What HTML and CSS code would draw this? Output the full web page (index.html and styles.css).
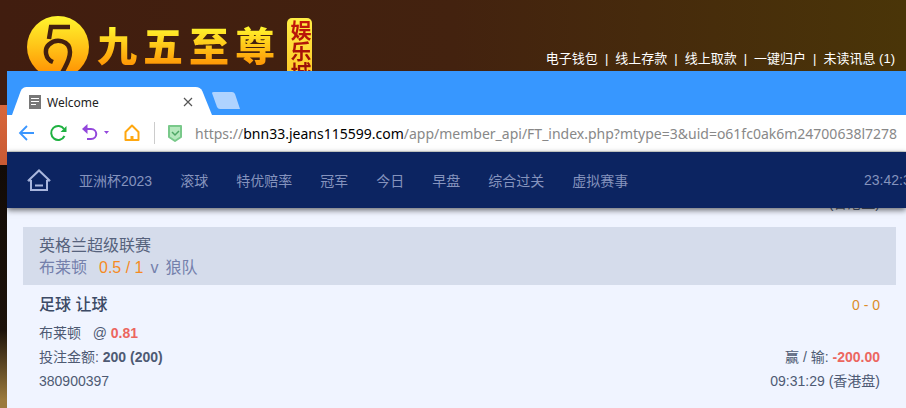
FILE: index.html
```html
<!DOCTYPE html>
<html lang="zh-CN">
<head>
  <meta charset="UTF-8">
  <title>Welcome</title>
  <link rel="stylesheet" href="styles.css">
</head>
<body>

<header class="site-header">
  <div class="logo">
    <svg class="logo-mark" viewBox="0 0 62 62">
      <defs>
        <linearGradient id="gold" x1="0" y1="0" x2="0" y2="1">
          <stop offset="0" stop-color="#fff62e"/>
          <stop offset="0.5" stop-color="#ffc317"/>
          <stop offset="1" stop-color="#ff8a00"/>
        </linearGradient>
      </defs>
      <circle cx="31" cy="31" r="31" fill="url(#gold)"/>
      <g fill="none" stroke="#43200f" stroke-width="4.500">
        <path d="M43 11H24L22 23"/>
        <path d="M26 46C18 43 17 33 22 28.500C29 22 43 24 43 36C43 44 39 49 35 57"/>
      </g>
    </svg>
    <div class="logo-name"><span>九</span><span>五</span><span>至</span><span>尊</span></div>
    <div class="logo-tag"><span>娱乐城</span></div>
  </div>
  <nav class="site-links">
    <a href="#">电子钱包</a><i>|</i>
    <a href="#">线上存款</a><i>|</i>
    <a href="#">线上取款</a><i>|</i>
    <a href="#">一键归户</a><i>|</i>
    <a href="#">未读讯息 (1)</a>
  </nav>
</header>

<div class="window">
  <div class="tabs">
    <div class="tab">
      <svg class="tab-shape" viewBox="0 0 206 28" preserveAspectRatio="none">
        <path d="M0 28L9 4Q11 0 15 0H189Q194 0 196 4L206 28Z" fill="#fff"/>
      </svg>
      <svg class="tab-icon" viewBox="0 0 12 14">
        <path d="M0 0H12V14H0Z" fill="#777"/>
        <path d="M2 3.500H10M2 6.500H10M2 9.500H7" stroke="#fff"/>
      </svg>
      <span class="tab-title">Welcome</span>
      <button class="icon-btn" aria-label="关闭标签">
        <svg width="10" height="10" viewBox="0 0 10 10"><path d="M1 1L9 9M9 1L1 9" stroke="#555" stroke-width="1.2"/></svg>
      </button>
    </div>
    <button class="icon-btn new-tab" aria-label="新标签">
      <svg width="28" height="17" viewBox="0 0 28 17"><path d="M2 0H20Q22 0 23 2L28 17H8Q6 17 5 15L0 1Q0 0 2 0Z" fill="#afd3ff"/></svg>
    </button>
  </div>

  <div class="toolbar">
    <button class="icon-btn" aria-label="后退">
      <svg width="18" height="18" viewBox="0 0 18 18" fill="none" stroke="#3a96ff" stroke-width="1.8"><path d="M16 9H2M9 2L2 9L9 16"/></svg>
    </button>
    <button class="icon-btn" aria-label="刷新">
      <svg width="18" height="18" viewBox="0 0 18 18"><path d="M15 5A7 7 0 1 0 15.500 12" fill="none" stroke="#1fb141" stroke-width="2"/><path d="M17.500 2V8H11.500Z" fill="#1fb141"/></svg>
    </button>
    <button class="icon-btn undo" aria-label="恢复">
      <svg width="28" height="18" viewBox="0 0 28 18"><path d="M4 5H9C16 5 16 15 9 15H5" fill="none" stroke="#9347dc" stroke-width="2"/><path d="M5.500 0V10L0 5Z" fill="#9347dc"/><path d="M22 7H27L24.500 10Z" fill="#9347dc"/></svg>
    </button>
    <button class="icon-btn" aria-label="主页">
      <svg width="18" height="18" viewBox="0 0 18 18"><path d="M2.500 16V8L9 1.500L15.500 8V16Z" fill="none" stroke="#ffa70f" stroke-width="2" stroke-linejoin="round"/><path d="M7.500 12H10.500V16H7.500Z" fill="#ffa70f"/></svg>
    </button>
    <span class="divider"></span>
    <svg class="shield" width="14" height="17" viewBox="0 0 14 17"><path d="M1 1H13V12L7 16L1 12Z" fill="#b5e8bd" stroke="#79c98a" stroke-width="2" stroke-linejoin="round"/><path d="M4 7L7 10L11 6" fill="none" stroke="#4fa765" stroke-width="1.5"/></svg>
    <div class="address" role="textbox" aria-label="地址" contenteditable="true" spellcheck="false">https://<b>bnn33.jeans115599.com</b>/app/member_api/FT_index.php?mtype=3&amp;uid=o61fc0ak6m24700638l7278</div>
  </div>

  <nav class="menu">
    <a class="menu-home" href="#" aria-label="首页">
      <svg width="24" height="22" viewBox="0 0 24 22" fill="none" stroke="#a9b6dd" stroke-width="2"><path d="M4 11V21H20V11M1 11.500H4L2 11L12 1.500L22 11L20 11.500H23M8 16.500H16"/></svg>
    </a>
    <a href="#">亚洲杯2023</a>
    <a href="#">滚球</a>
    <a href="#">特优赔率</a>
    <a href="#">冠军</a>
    <a href="#">今日</a>
    <a href="#">早盘</a>
    <a href="#">综合过关</a>
    <a href="#">虚拟赛事</a>
    <div class="clock"><span>23:42:35</span></div>
  </nav>

  <main class="bets">
    <!-- tail of the previous record, scrolled under the menu -->
    <div class="prev-record"><span>(香港盘)</span></div>

    <section class="record">
      <div class="match">
        <div class="league">英格兰超级联赛</div>
        <div class="teams"><span>布莱顿</span><span class="handicap">0.5 / 1</span><span class="versus">v</span><span>狼队</span></div>
      </div>
      <div class="detail">
        <div class="row row-title"><h2>足球 让球</h2><span class="score">0 - 0</span></div>
        <div class="row"><span>布莱顿 &nbsp; @ <b class="red">0.81</b></span></div>
        <div class="row"><span>投注金额: <b>200 (200)</b></span><span>赢 / 输: <b class="red">-200.00</b></span></div>
        <div class="row"><span>380900397</span><span>09:31:29 (香港盘)</span></div>
      </div>
    </section>
  </main>
</div>

</body>
</html>
```
FILE: styles.css
```css
* {
  box-sizing: border-box;
}

body {
  margin: 0;
  height: 100vh;
  overflow: hidden;
  display: flex;
  flex-direction: column;
  font-family: "Liberation Sans", "Noto Sans CJK SC", sans-serif;
  font-size: 14px;
  background:
    linear-gradient(#0000 105px, #d8683c 105px, #c95a33 165px, #120b06 165px, #1c120b 330px, #9b7a3c 400px),
    linear-gradient(to right, #411d0f, #43220f 50%, #4a3508);
}

a {
  color: inherit;
  text-decoration: none;
}

.icon-btn {
  display: flex;
  padding: 0;
  border: 0;
  background: none;
  cursor: pointer;
}

/* 网站头部 */
.site-header {
  flex: none;
  height: 71px;
  display: flex;
  justify-content: space-between;
  overflow: hidden;
  padding: 0 11px 0 27px;
}

.logo {
  display: flex;
  align-items: flex-start;
}

.logo-mark {
  width: 62px;
  margin-top: 16px;
}

.logo-name {
  display: flex;
  gap: 6px;
  margin: 18px 12px 0 8px;
  font-size: 40px;
  font-weight: 900;
  line-height: 58px;
  color: transparent;
  background: linear-gradient(#fff62e 15%, #ffc317 50%, #ff8a00 90%);
  background-clip: text;
  -webkit-background-clip: text;
}

.logo-tag {
  margin-top: 18px;
  padding: 2px 0;
  height: 80px;
  border-radius: 5px;
  background: linear-gradient(#ffee45, #ffb91d);
  writing-mode: vertical-rl;
  font-size: 21px;
  font-weight: 700;
  line-height: 25px;
}

.logo-tag span {
  color: transparent;
  background: linear-gradient(#c5170b, #8c1006);
  background-clip: text;
  -webkit-background-clip: text;
}

.site-links {
  display: flex;
  align-self: flex-end;
  gap: 7px;
  font-size: 13px;
  line-height: 24px;
  color: #fff;
  white-space: nowrap;
}

.site-links i {
  font-style: normal;
}

/* 浏览器窗口 */
.window {
  flex: 1;
  margin-left: 7px;
  min-width: 0;
  display: flex;
  flex-direction: column;
  overflow: hidden;
  background: #f0f4ff;
}

.tabs {
  display: flex;
  align-items: flex-end;
  height: 44px;
  padding-left: 5px;
  background: #3797ff;
}

.tab {
  position: relative;
  display: flex;
  align-items: center;
  width: 200px;
  height: 28px;
  padding: 2px 19px 0 17px;
}

.tab-shape {
  position: absolute;
  inset: 0;
  width: 100%;
  height: 100%;
}

.tab-icon {
  position: relative;
  width: 12px;
  height: 14px;
}

.tab-title {
  position: relative;
  flex: 1;
  margin-left: 6px;
  font-family: "Noto Sans", "Open Sans", sans-serif;
  font-size: 12px;
  color: #222;
}

.tab .icon-btn {
  position: relative;
}

.new-tab {
  margin: 0 0 6px;
}

.toolbar {
  display: flex;
  align-items: center;
  gap: 13px;
  height: 37px;
  padding-left: 11px;
  background: #fff;
  border-bottom: 1px solid #d8dcd8;
}

.undo {
  margin-left: 2px;
}

.divider {
  width: 1px;
  height: 22px;
  background: #ccc;
}

.toolbar .icon-btn,
.shield {
  flex: none;
}

.address {
  flex: 1;
  min-width: 0;
  overflow: hidden;
  white-space: nowrap;
  font-family: "Noto Sans", "Open Sans", sans-serif;
  font-size: 14px;
  color: #888;
}

.address b {
  font-weight: 400;
  color: #000;
}

.menu {
  position: relative;
  z-index: 1;
  flex: none;
  display: flex;
  align-items: center;
  gap: 28px;
  height: 56px;
  padding-left: 20px;
  background: #0c2461;
  color: #8593bd;
  white-space: nowrap;
  box-shadow: 0 2px 6px rgba(0, 0, 0, 0.6);
}

.menu-home {
  display: flex;
}

/* 右侧时钟超出窗口 */
.clock {
  flex: 1;
  min-width: 0;
  display: flex;
  justify-content: flex-end;
}

.clock span {
  width: 42px;
}

.bets {
  padding: 0 10px 0 16px;
  color: #4e5a73;
}

.prev-record {
  display: flex;
  flex-direction: column;
  align-items: flex-end;
  justify-content: flex-end;
  height: 19px;
  padding: 0 16px 12px;
  line-height: 24px;
}

.match {
  padding: 8px 16px 6px;
  background: #d5dceb;
  font-size: 16px;
  line-height: 22px;
}

.league {
  color: #56627c;
}

.teams {
  display: flex;
  color: #7480ab;
}

.handicap {
  margin: 0 7px 0 12px;
  color: #f58a1f;
}

.versus {
  margin-right: 7px;
}

.detail {
  padding: 8px 16px 12px;
}

.row {
  display: flex;
  justify-content: space-between;
  line-height: 24px;
}

.row-title {
  margin-bottom: 4px;
}

.row h2 {
  margin: 0;
  font-size: 16px;
  font-weight: 500;
  color: #3c4a65;
}

.score {
  color: #dc8d2a;
}

.row .red {
  color: #ec6660;
}
```
